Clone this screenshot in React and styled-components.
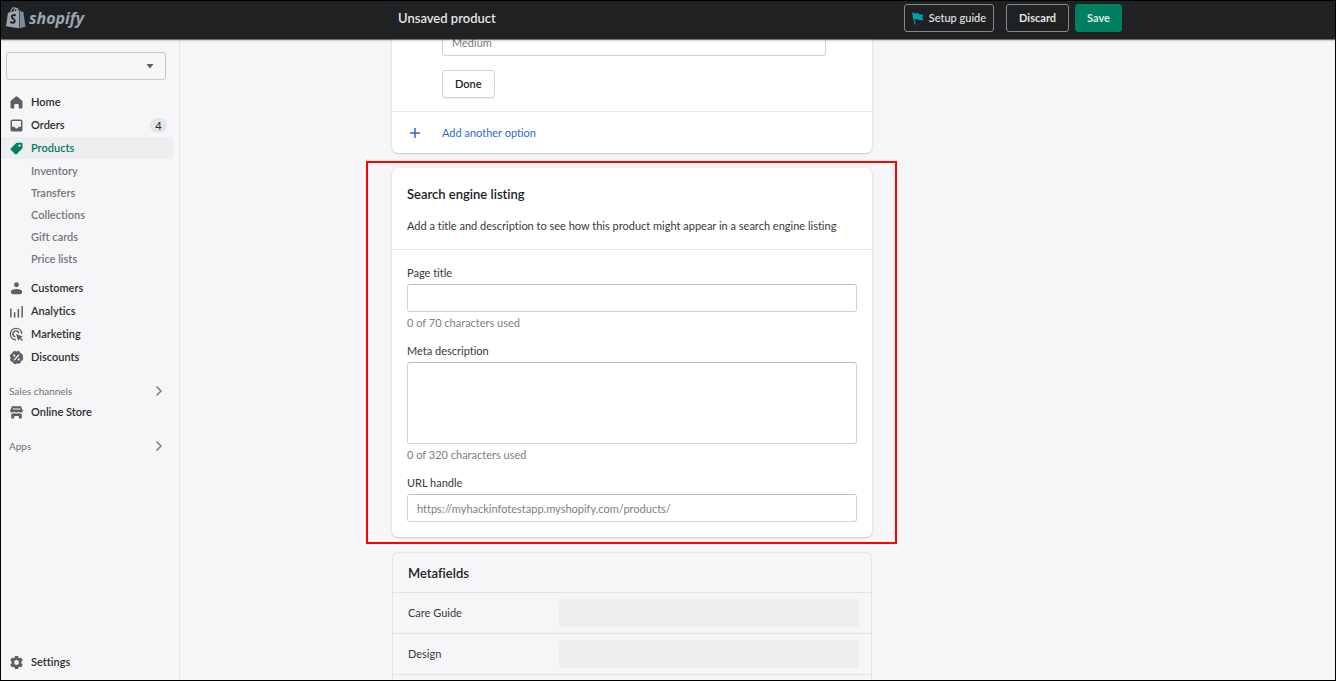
import React from "react";
import styled, { createGlobalStyle } from "styled-components";

const GlobalStyle = createGlobalStyle`
  *, *::before, *::after { box-sizing: border-box; }
  body {
    margin: 0;
    background: #f6f6f8;
    color: #202223;
    font-family: Lato, "Open Sans", sans-serif;
    font-size: 11px;
    font-variant-ligatures: none;
    line-height: 16px;
  }
  button, input, textarea, select { font: inherit; color: inherit; }
`;

const Frame = styled.div`
  position: relative;
  display: flex;
  flex-direction: column;
  height: 100vh;
  overflow: hidden;
  border: 1px solid #000;
`;

const TopBar = styled.header`
  position: absolute;
  inset: 0 0 auto 0;
  z-index: 2;
  display: flex;
  height: 38px;
  background: #202123;
  color: #e3e5e7;
  box-shadow: 0 1px 1px rgba(0, 0, 0, 0.5), 0 2px 3px rgba(0, 0, 0, 0.1);
`;

const Logo = styled.a`
  display: flex;
  align-items: flex-start;
  gap: 3px;
  width: 179px;
  flex: none;
  padding: 5px 0 0 5px;
  color: #9aa5b2;
  text-decoration: none;
`;

const LogoWord = styled.span`
  font-family: "Open Sans", sans-serif;
  font-size: 16px;
  line-height: 24px;
  font-weight: 700;
  font-style: italic;
`;

const TopBarArea = styled.div`
  flex: 1;
  min-width: 0;
`;

const TopBarContent = styled.div`
  display: flex;
  align-items: center;
  max-width: 731px;
  margin: 0 auto;
  padding: 3px 1px 0 6px;
`;

const PageName = styled.h1`
  flex: 1;
  margin: 0;
  font-size: 13px;
  line-height: 20px;
  font-weight: 600;
`;

const BarButton = styled.button`
  display: flex;
  align-items: center;
  justify-content: center;
  gap: 5px;
  height: 28px;
  margin-left: ${(p) => (p.$spaced ? "12px" : "6px")};
  padding: 0 ${(p) => (p.$icon ? "7px" : p.$primary ? "11px" : "12px")};
  border: 1px solid ${(p) => (p.$primary ? "#008060" : "#85888c")};
  border-radius: 3px;
  background: ${(p) => (p.$primary ? "#008060" : "transparent")};
  font-weight: ${(p) => (p.$icon ? 500 : 700)};
  white-space: nowrap;
`;

const Body = styled.div`
  display: flex;
  flex: 1;
  min-height: 0;
`;

const Sidebar = styled.nav`
  display: flex;
  flex-direction: column;
  flex: none;
  width: 179px;
  padding: 51px 6px 7px 0;
  border-right: 1px solid #e4e5e8;
`;

const StoreSelect = styled.div`
  display: grid;
  align-items: center;
  margin: 0 7px 11px 5px;

  & > * { grid-area: 1 / 1; }
  svg { justify-self: end; margin-right: 12px; pointer-events: none; }
`;

const Select = styled.select`
  appearance: none;
  width: 100%;
  height: 28px;
  padding: 0 24px 0 8px;
  border: 1px solid #c5c8cc;
  border-radius: 3px;
  background: transparent;
`;

const NavList = styled.ul`
  display: flex;
  flex-direction: column;
  gap: 1px;
  margin: ${(p) => (p.$separate ? "7px" : "0")} 0 0;
  padding: 0;
  list-style: none;
`;

const NavLink = styled.a`
  display: flex;
  align-items: center;
  gap: 7px;
  height: 22px;
  padding: 0 6px 0 8px;
  border-radius: 0 3px 3px 0;
  background: ${(p) => (p.$active ? "#edeeef" : "transparent")};
  color: ${(p) => (p.$active ? "#007a5c" : "#2b2e30")};
  font-weight: 600;
  text-decoration: none;

  svg { flex: none; fill: ${(p) => (p.$active ? "#008060" : "#5c5f62")}; }
`;

const SubList = styled.ul`
  margin: 0;
  padding: 0;
  list-style: none;
`;

const SubLink = styled.a`
  display: block;
  padding-left: 30px;
  line-height: 22px;
  color: #72767a;
  font-weight: 600;
  text-decoration: none;
`;

const Count = styled.span`
  margin-left: auto;
  min-width: 17px;
  border-radius: 8px;
  background: #e4e5e7;
  line-height: 15px;
  font-weight: 500;
  text-align: center;
`;

const GroupButton = styled.button`
  display: flex;
  align-items: center;
  justify-content: space-between;
  height: 20px;
  margin-top: 13px;
  padding: 0 10px 0 8px;
  border: 0;
  background: none;
  color: #6d7175;
  font-size: 10px;
`;

const SidebarFooter = styled.div`
  margin-top: auto;
`;

const Main = styled.main`
  flex: 1;
  min-width: 0;
`;

const Columns = styled.div`
  display: grid;
  grid-template-columns: minmax(0, 2fr) minmax(0, 1fr);
  column-gap: 11px;
  max-width: 731px;
  margin: 0 auto;
`;

const Stack = styled.div`
  display: flex;
  flex-direction: column;
  gap: 15px;
`;

const Card = styled.section`
  position: relative;
  border-radius: 6px;
  background: #fff;
  box-shadow: 0 0 2px rgba(23, 24, 24, 0.1), 0 1px 2px rgba(0, 0, 0, 0.15);
`;

const OptionFields = styled.div`
  display: flex;
  flex-direction: column;
  align-items: flex-start;
  gap: 14px;
  padding: 27px 46px 13px 50px;
`;

const Section = styled.div`
  padding: 15px;
  & + & { border-top: 1px solid #e8e9eb; }
`;

const AddOption = styled.button`
  display: grid;
  grid-template-columns: 35px 1fr;
  align-items: center;
  width: 100%;
  height: 42px;
  padding: 0 15px;
  border: 0;
  border-top: 1px solid #e8e9eb;
  background: none;
  color: #2c6ecb;
  text-align: left;
`;

const DoneButton = styled.button`
  height: 28px;
  padding: 0 12px;
  border: 1px solid #d0d3d6;
  border-radius: 3px;
  background: #fff;
  box-shadow: 0 1px 0 rgba(0, 0, 0, 0.05);
  font-weight: 600;
`;

const CardTitle = styled.h2`
  margin: 0;
  font-size: 13px;
  line-height: 22px;
  font-weight: 600;
`;

const Description = styled.p`
  margin: 13px 0 0;
  color: #36393b;
`;

const Field = styled.div`
  display: flex;
  flex-direction: column;
  gap: 3px;
  & + & { margin-top: 12px; }
`;

const Label = styled.label`
  color: #36393b;
`;

const Help = styled.span`
  color: #7b7f83;
`;

const Input = styled.input`
  display: block;
  width: 100%;
  height: 28px;
  padding: 0 9px;
  border: 1px solid #d0d3d6;
  border-top-color: #bbbfc4;
  border-radius: 3px;
  background: #fff;
  &::placeholder { color: #7b7f83; opacity: 1; }
`;

const TextArea = styled(Input).attrs({ as: "textarea" })`
  height: 82px;
  padding: 6px 9px;
  resize: none;
`;

const Highlight = styled.div`
  position: absolute;
  inset: -7px -25px -7px -26px;
  border: 2px solid #ff0000;
  pointer-events: none;
`;

const MetaCard = styled.section`
  padding-bottom: 24px;
  border: 1px solid #e4e5e7;
  border-radius: 6px;
`;

const MetaHeader = styled.div`
  padding: 9px 15px 8px;
`;

const MetaRow = styled.div`
  display: flex;
  align-items: center;
  justify-content: space-between;
  padding: 6px 12px 6px 15px;
  border-top: 1px solid #e1e3e5;
  color: #36393b;
  &:last-child { border-bottom: 1px solid #e1e3e5; }
`;

const Skeleton = styled.div`
  width: 300px;
  height: 28px;
  border-radius: 3px;
  background: #edeeef;
`;

const Icon = ({ size = 15, children }) => (
  <svg width={size} height={size} viewBox="0 0 20 20" aria-hidden="true">{children}</svg>
);

const icons = {
  home: <path d="M8.700 2.300a2 2 0 0 1 2.600 0l5.900 4.900c.5.5.8 1 .8 1.700V16.500a1.500 1.500 0 0 1-1.500 1.500H14a1 1 0 0 1-1-1v-3.500a1.500 1.500 0 0 0-1.500-1.500h-3A1.500 1.500 0 0 0 7 13.500V17a1 1 0 0 1-1 1H3.500A1.500 1.500 0 0 1 2 16.500V8.900c0-.7.3-1.200.8-1.700z" />,
  orders: <path fillRule="evenodd" d="M4.500 2h11A2.500 2.500 0 0 1 18 4.500v11a2.500 2.500 0 0 1-2.500 2.500h-11A2.500 2.500 0 0 1 2 15.500v-11A2.500 2.500 0 0 1 4.500 2zM4 4v7.500h2.600a1 1 0 0 1 1 .8 2.500 2.500 0 0 0 4.800 0 1 1 0 0 1 1-.8H16V4z" />,
  products: <path fillRule="evenodd" d="M9.700 2.800A2 2 0 0 1 11.100 2.200H16.500a1.500 1.500 0 0 1 1.500 1.500v5.300a2 2 0 0 1-.6 1.400l-7 7a1.800 1.800 0 0 1-2.500 0l-5.300-5.300a1.800 1.800 0 0 1 0-2.500zM14 7.700a1.600 1.600 0 1 0 0-3.200 1.600 1.600 0 0 0 0 3.200z" />,
  customers: <><circle cx="10" cy="5" r="3.200" /><path d="M2.500 14.300c0-2.600 3-3.800 7.500-3.800s7.500 1.200 7.500 3.800c0 2-1 3.200-2.500 3.200H5c-1.500 0-2.500-1.200-2.500-3.200z" /></>,
  analytics: <path d="M1.500 6h2v12h-2zM6.500 11h2v7h-2zM11.500 6.500h2V18h-2zM16.500 2.500h2V18h-2z" />,
  marketing: <>
    <path fill="none" stroke="#5c5f62" strokeWidth="1.900" strokeLinecap="round" d="M8.500 17A7.600 7.600 0 1 1 17 8.500M7.700 12.900A4 4 0 1 1 12.900 7.700" />
    <path d="M9.300 9.300l9.200 3.200-3 1.700 3.200 3.200-1.400 1.400-3.200-3.200-1.700 3z" />
  </>,
  discounts: <>
    <circle cx="10" cy="10" r="7.900" />
    <circle cx="10" cy="10" r="7.900" fill="none" stroke="#5c5f62" strokeWidth="2.200" strokeDasharray="4 2.200" />
    <path stroke="#f6f6f8" strokeWidth="1.600" strokeLinecap="round" d="M7 13.300l6-6.600" />
    <circle cx="7" cy="7.500" r="1.400" fill="#f6f6f8" />
    <circle cx="13" cy="12.500" r="1.400" fill="#f6f6f8" />
  </>,
  store: <path fillRule="evenodd" d="M4 1.800h12l2.500 5.400c0 1.700-1.200 2.800-2.700 2.800-1.200 0-2.200-.6-2.800-1.500-.6.9-1.700 1.500-3 1.500s-2.400-.6-3-1.500c-.6.9-1.600 1.500-2.800 1.500-1.500 0-2.700-1.100-2.700-2.800zM4.800 4.800v1.200h10.400V4.800zM3 11.500c2 .2 3.300-.1 4.300-.8.8.5 1.700.8 2.700.8s1.900-.3 2.700-.8c1 .7 2.300 1 4.300.8V18h-4v-3.500H7V18H3z" />,
  settings: <path fillRule="evenodd" d="M8 1.200h4l.5 2.300c.6.2 1.100.5 1.600.9l2.300-.8 2 3.500-1.800 1.600v2.600l1.800 1.600-2 3.500-2.300-.8c-.5.4-1 .7-1.600.9L12 18.800H8l-.5-2.300c-.6-.2-1.100-.5-1.600-.9l-2.300.8-2-3.500 1.800-1.600V8.700L1.600 7.100l2-3.500 2.300.8c.5-.4 1-.7 1.600-.9zM10 13.200a3.200 3.200 0 1 0 0-6.400 3.200 3.200 0 0 0 0 6.400z" />,
};

const Chevron = () => (
  <svg width="8" height="12" viewBox="0 0 8 12" fill="none" stroke="#7b7f83" strokeWidth="1.500" aria-hidden="true">
    <path d="M1.500 1.500L6 6l-4.500 4.500" />
  </svg>
);

const Bag = () => (
  <svg width="20" height="23" viewBox="0 0 20 23" aria-hidden="true">
    <path fill="none" stroke="#9aa5b2" strokeWidth="1.100" d="M4.500 7C5 4 6.500 1.700 8.300 1.700c1.500 0 2.300 1.700 2.300 4.300M7.700 6c.4-2.500 1.500-3.800 2.700-3.800 1.300 0 1.900 1.500 2.200 3.300" />
    <path fill="#9aa5b2" d="M2 6.800l11-2.600v18L0 20.200z" />
    <path fill="#7f8c99" d="M13.600 4.200l1.500 1.300 2.200.3L19.500 20.700l-5.900 1.500z" />
    <path fill="none" stroke="#202123" strokeWidth="1.900" d="M9.800 9.400c-1.800-.8-4-.3-4 1.400 0 2 3 1.900 3 4.200 0 2-2.400 2.300-4.500.9" />
  </svg>
);

const primaryNav = [
  { name: "Home", icon: "home" },
  { name: "Orders", icon: "orders", count: 4 },
  { name: "Products", icon: "products", active: true },
];
const productNav = ["Inventory", "Transfers", "Collections", "Gift cards", "Price lists"];
const secondaryNav = [
  { name: "Customers", icon: "customers" },
  { name: "Analytics", icon: "analytics" },
  { name: "Marketing", icon: "marketing" },
  { name: "Discounts", icon: "discounts" },
];

const NavItem = ({ name, icon, count, active }) => (
  <NavLink href="#" $active={active} aria-current={active ? "page" : undefined}>
    <Icon>{icons[icon]}</Icon>
    {name}
    {count && <Count>{count}</Count>}
  </NavLink>
);

export default function App() {
  return (
    <Frame>
      <GlobalStyle />
      <TopBar>
        <Logo href="#">
          <Bag />
          <LogoWord>shopify</LogoWord>
        </Logo>
        <TopBarArea>
          <TopBarContent>
            <PageName>Unsaved product</PageName>
            <BarButton type="button" $icon>
              <svg width="12" height="13" viewBox="0 0 12 13" fill="#00a0ac" aria-hidden="true">
                <path d="M0 .5l1.200-.3.300 1H7l.5 1.300h4L10.200 5l1.300 3.300H6.500L6 7.200H2.500l1.200 5.300H2.500z" />
              </svg>
              Setup guide
            </BarButton>
            <BarButton type="button" $spaced>Discard</BarButton>
            <BarButton type="button" $primary>Save</BarButton>
          </TopBarContent>
        </TopBarArea>
      </TopBar>

      <Body>
        <Sidebar>
          <StoreSelect>
            <Select aria-label="Store" defaultValue=""><option value="" /></Select>
            <svg width="8" height="5" viewBox="0 0 8 5" fill="#5c5f62" aria-hidden="true"><path d="M.5 0h7L4 4.500z" /></svg>
          </StoreSelect>
          <NavList>
            {primaryNav.map((item) => <li key={item.name}><NavItem {...item} /></li>)}
            <li>
              <SubList>
                {productNav.map((name) => <li key={name}><SubLink href="#">{name}</SubLink></li>)}
              </SubList>
            </li>
          </NavList>
          <NavList $separate>
            {secondaryNav.map((item) => <li key={item.name}><NavItem {...item} /></li>)}
          </NavList>
          <GroupButton type="button">Sales channels<Chevron /></GroupButton>
          <NavItem name="Online Store" icon="store" />
          <GroupButton type="button">Apps<Chevron /></GroupButton>
          <SidebarFooter>
            <NavItem name="Settings" icon="settings" />
          </SidebarFooter>
        </Sidebar>

        <Main>
          <Columns>
            <Stack>
              <Card>
                <OptionFields>
                  <Input aria-label="Option value" placeholder="Medium" />
                  <DoneButton type="button">Done</DoneButton>
                </OptionFields>
                <AddOption type="button">
                  <svg width="16" height="10" viewBox="0 0 16 10" stroke="#2c6ecb" strokeWidth="1.500" aria-hidden="true">
                    <path d="M8 0v10M3 5h10" />
                  </svg>
                  Add another option
                </AddOption>
              </Card>

              <Card>
                <Section>
                  <CardTitle>Search engine listing</CardTitle>
                  <Description>
                    Add a title and description to see how this product might appear in a search engine listing
                  </Description>
                </Section>
                <Section>
                  <Field>
                    <Label htmlFor="page-title">Page title</Label>
                    <Input id="page-title" />
                    <Help>0 of 70 characters used</Help>
                  </Field>
                  <Field>
                    <Label htmlFor="meta-description">Meta description</Label>
                    <TextArea id="meta-description" />
                    <Help>0 of 320 characters used</Help>
                  </Field>
                  <Field>
                    <Label htmlFor="url-handle">URL handle</Label>
                    <Input id="url-handle" placeholder="https://myhackinfotestapp.myshopify.com/products/" />
                  </Field>
                </Section>
                <Highlight />
              </Card>

              <MetaCard>
                <MetaHeader><CardTitle>Metafields</CardTitle></MetaHeader>
                <MetaRow>Care Guide<Skeleton /></MetaRow>
                <MetaRow>Design<Skeleton /></MetaRow>
              </MetaCard>
            </Stack>
          </Columns>
        </Main>
      </Body>
    </Frame>
  );
}
